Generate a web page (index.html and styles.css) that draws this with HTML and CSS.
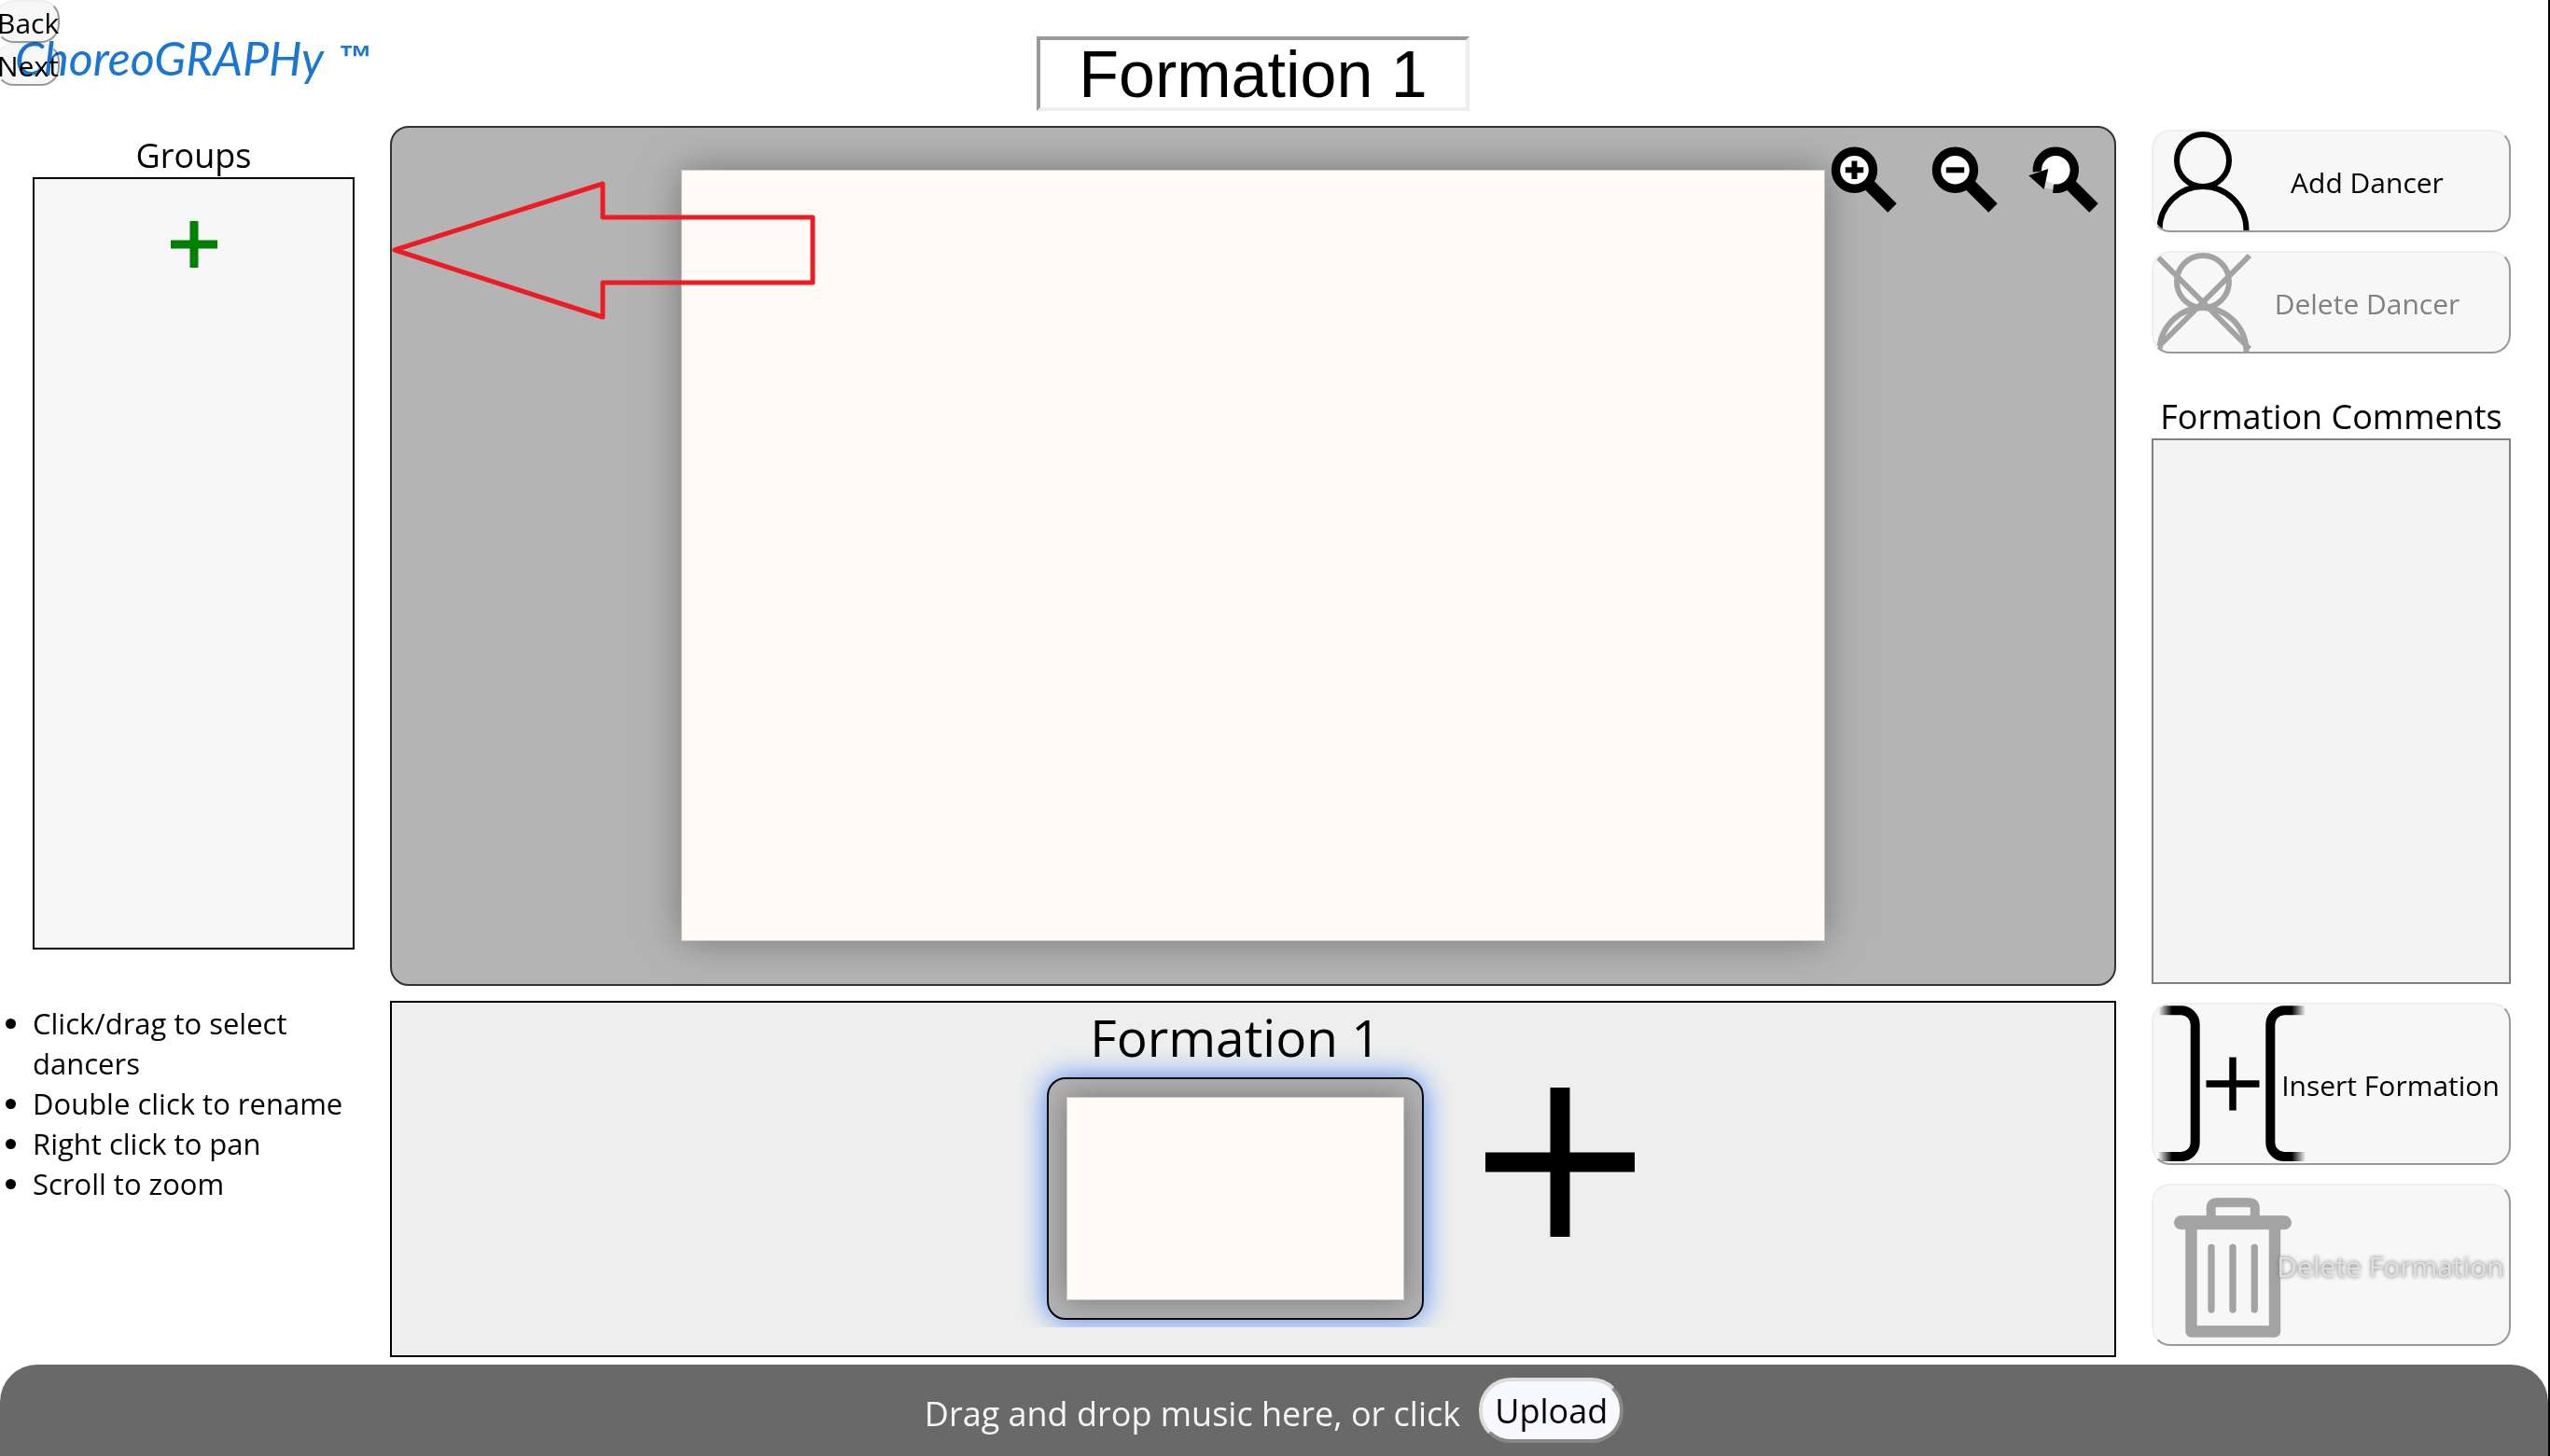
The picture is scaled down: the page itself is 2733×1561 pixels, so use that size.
FILE: index.html
```html
<!DOCTYPE html>
<html lang="en">
<head>
<meta charset="utf-8">
<title>ChoreoGRAPHy</title>
<meta name="viewport" content="width=device-width, initial-scale=1">
<link rel="stylesheet" href="styles.css">
</head>
<body>
<nav class="history" aria-label="Tutorial">
  <button class="btn history-btn" type="button">Back</button>
  <button class="btn history-btn" type="button">Next</button>
</nav>

<main class="workspace">
  <aside class="side-left">
    <h1 class="brand"><span class="brand-name">ChoreoGRAPHy</span><span class="brand-mark">™</span></h1>
    <h2 class="label">Groups</h2>
    <section class="groups">
      <button class="plain-btn" type="button" aria-label="Add group">
        <svg class="icon-group-add" viewBox="0 0 50 50"><path d="M25 0V50M0 25H50" stroke="#008000" stroke-width="9"/></svg>
      </button>
    </section>
    <ul class="tips">
      <li>Click/drag to select dancers</li>
      <li>Double click to rename</li>
      <li>Right click to pan</li>
      <li>Scroll to zoom</li>
    </ul>
  </aside>

  <div class="center">
    <header class="title-row">
      <input class="title-input" type="text" value="Formation 1" aria-label="Formation name">
    </header>

    <section class="stage">
      <div class="sheet"></div>
      <div class="zoom-tools">
        <button class="plain-btn" type="button" aria-label="Zoom in">
          <svg class="icon-zoom" viewBox="0 0 72 72">
            <path d="M42 42L68 68" stroke="#000" stroke-width="13.5"/>
            <circle cx="27.5" cy="27.3" r="20" fill="#fff" stroke="#000" stroke-width="9.4"/>
            <path d="M27.5 17.6V37M17.8 27.3H37.2" stroke="#000" stroke-width="6"/>
          </svg>
        </button>
        <button class="plain-btn" type="button" aria-label="Zoom out">
          <svg class="icon-zoom" viewBox="0 0 72 72">
            <path d="M42 42L68 68" stroke="#000" stroke-width="13.5"/>
            <circle cx="27.5" cy="27.3" r="20" fill="#fff" stroke="#000" stroke-width="9.4"/>
            <path d="M17.8 27.3H37.2" stroke="#000" stroke-width="6"/>
          </svg>
        </button>
        <button class="plain-btn" type="button" aria-label="Reset zoom">
          <svg class="icon-zoom" viewBox="0 0 72 72">
            <path d="M42 42L68 68" stroke="#000" stroke-width="13.5"/>
            <circle cx="27.3" cy="27.3" r="16" fill="#fff"/>
            <path d="M15 38L24.5 42L24 48L14 46Z" fill="#d8d8d8"/>
            <path d="M7.4 29A20 20 0 1 1 24.6 47.1" fill="none" stroke="#000" stroke-width="9.4"/>
            <path d="M-1.7 33.3L19.3 26L14.7 48Z"/>
          </svg>
        </button>
      </div>
      <svg class="pointer" viewBox="0 0 460 160" aria-hidden="true">
        <path d="M8 83L231 12V48H456V118H231V155Z" fill="none" stroke="#ed1c24" stroke-width="5" stroke-linejoin="round"/>
      </svg>
    </section>

    <section class="timeline">
      <article class="frame">
        <h3 class="frame-name">Formation 1</h3>
        <div class="thumb"><div class="thumb-sheet"></div></div>
      </article>
      <button class="plain-btn frame-add" type="button" aria-label="Add formation">
        <svg class="icon-frame-add" viewBox="0 0 160 160"><path d="M80 0V160M0 80H160" stroke="#000" stroke-width="21"/></svg>
      </button>
    </section>
  </div>

  <aside class="side-right">
    <button class="btn action dancer" type="button">
      <svg class="action-icon" width="110" height="106" viewBox="0 0 110 106" fill="none" stroke="#000" stroke-width="6">
        <circle cx="53" cy="31" r="28"/><path d="M6.500 107V105.500A46.500 46.500 0 0 1 99.500 105.500V107"/>
      </svg>
      Add Dancer
    </button>
    <button class="btn action dancer" type="button" disabled>
      <svg class="action-icon" width="110" height="106" viewBox="0 0 110 106" fill="none" stroke="#a3a3a3" stroke-width="6">
        <circle cx="53" cy="31" r="28"/><path d="M6.500 107V105.500A46.500 46.500 0 0 1 99.500 105.500V107M5 5L103 103M103 3L5 101"/>
      </svg>
      Delete Dancer
    </button>
    <label class="label comments-label" for="comments">Formation Comments</label>
    <textarea class="comments" id="comments"></textarea>
    <button class="btn action formation" type="button">
      <svg class="action-icon" width="170" height="170" viewBox="0 0 170 170" fill="none" stroke-width="10">
        <defs>
          <linearGradient id="fade-left" gradientUnits="userSpaceOnUse" x1="5" y1="0" x2="20" y2="0"><stop offset="0" stop-opacity="0"/><stop offset="1"/></linearGradient>
          <linearGradient id="fade-right" gradientUnits="userSpaceOnUse" x1="148" y1="0" x2="163" y2="0"><stop offset="0"/><stop offset="1" stop-opacity="0"/></linearGradient>
        </defs>
        <path d="M5 6.300H29.700A15 15 0 0 1 44.700 21.300V148A15 15 0 0 1 29.700 163H5" stroke="url(#fade-left)"/>
        <path d="M163 6.300H140.300A15 15 0 0 0 125.300 21.300V148A15 15 0 0 0 140.300 163H163" stroke="url(#fade-right)"/>
        <path d="M85 56.500V113.500M56.500 85H113.500" stroke="#000" stroke-width="7.500"/>
      </svg>
      Insert Formation
    </button>
    <button class="btn action formation" type="button" disabled>
      <svg class="action-icon" width="170" height="170" viewBox="0 0 170 170" fill="none" stroke="#a3a3a3">
        <path d="M61.700 34V24Q61.700 18.300 68 18.300H102.500Q108.800 18.300 108.800 24V34" stroke-width="10"/>
        <rect x="22" y="32.300" width="126" height="15" rx="7.500" fill="#a3a3a3" stroke="none"/>
        <path d="M40.500 45V156.500H130V45" stroke-width="12.400" stroke-linejoin="round"/>
        <path d="M62 66.500V133M85 66.500V133M108.300 66.500V133" stroke-width="7.300" stroke-linecap="round"/>
      </svg>
      <span class="ghost-text">Delete Formation</span>
    </button>
  </aside>
</main>

<footer class="music">
  <span class="music-text">Drag and drop music here, or click</span>
  <button class="btn upload" type="button">Upload</button>
</footer>
</body>
</html>
```
FILE: styles.css
```css
* {
  box-sizing: border-box;
}

body {
  margin: 0;
  min-height: 100vh;
  display: flex;
  flex-direction: column;
  position: relative;
  overflow-x: hidden;
  border-right: 2px solid #000;
  background: #fff;
  color: #000;
  font-family: "Open Sans", "Noto Sans", sans-serif;
  font-size: 30px;
}

h1, h2, h3 {
  margin: 0;
  font-weight: 400;
}

button {
  padding: 0;
  font: inherit;
  color: inherit;
}

svg {
  display: block;
  overflow: visible;
}

.btn {
  padding-top: 3px;
  border: 2px solid;
  border-color: #efefef #999 #999 #efefef;
  border-radius: 20px;
  background: #f7f7f7;
}

.plain-btn {
  border: 0;
  background: none;
}

/* Tutorial steps, floating over the corner of the page */
.history {
  position: absolute;
  top: 0;
  left: -5px;
  display: flex;
  flex-direction: column;
}

.history-btn {
  width: 69px;
  height: 46px;
  line-height: 39px;
}

.workspace {
  flex: 1;
  display: grid;
  grid-template-columns: 418px 1fr 463px;
}

/* Left column */
.side-left {
  display: flex;
  flex-direction: column;
}

.brand {
  height: 140px;
  padding: 34px 0 0 16px;
  display: flex;
  align-items: flex-start;
  gap: 16px;
  color: #1976d2;
  line-height: 56px;
  white-space: nowrap;
  mix-blend-mode: multiply;
}

.brand-name {
  font-family: Lato, sans-serif;
  font-size: 50px;
  font-style: italic;
}

.brand-mark {
  font-family: "Liberation Sans", sans-serif;
  font-size: 36px;
  font-weight: 700;
}

.label {
  height: 50px;
  font-size: 36px;
  line-height: 54px;
  text-align: center;
}

.side-left .label {
  margin: 0 38px 0 35px;
}

.groups {
  flex: 1;
  margin: 0 38px 0 35px;
  padding-top: 45px;
  display: flex;
  justify-content: center;
  align-items: flex-start;
  border: 2px solid #000;
  background: #f7f7f7;
}

.icon-group-add {
  width: 50px;
  height: 50px;
}

.tips {
  min-height: 387px;
  margin: 58px 0 0;
  padding: 0 38px 0 35px;
  font-size: 31px;
  line-height: 43px;
}

/* Centre column */
.center {
  display: flex;
  flex-direction: column;
  padding-bottom: 8px;
}

.title-row {
  height: 135px;
  padding-top: 39px;
  display: flex;
  justify-content: center;
  align-items: flex-start;
}

.title-input {
  width: 464px;
  height: 80px;
  padding: 2px 0 0;
  border: 4px solid;
  border-color: #999 #eee #eee #999;
  background: #fff;
  font-family: "Liberation Sans", sans-serif;
  font-size: 70px;
  text-align: center;
}

.stage {
  flex: 1;
  min-height: 400px;
  position: relative;
  display: flex;
  padding: 45px 310px 46px;
  border: 2px solid #333;
  border-radius: 20px;
  background: #b4b4b4;
}

.sheet {
  flex: 1;
  border: 1px solid #cfcac6;
  background: #fffaf5;
  box-shadow: 0 0 40px #777;
}

.zoom-tools {
  position: absolute;
  top: 18px;
  right: 18px;
  display: flex;
  gap: 36px;
}

.icon-zoom {
  width: 72px;
  height: 72px;
}

.pointer {
  position: absolute;
  top: 48px;
  left: -5px;
  width: 460px;
  height: 160px;
}

.timeline {
  height: 382px;
  margin-top: 16px;
  display: grid;
  grid-template-columns: 1fr 442px 1fr;
  border: 2px solid #000;
  background: #eee;
}

.frame {
  grid-column: 2;
  height: 348px;
  margin: 0 -40px;
  padding: 0 78px 0 40px;
  overflow: hidden;
}

.frame-name {
  font-size: 55px;
  line-height: 74px;
  text-align: center;
}

.thumb {
  height: 260px;
  margin-top: 6px;
  padding: 19px;
  display: flex;
  border: 2px solid #000;
  border-radius: 20px;
  background: #b3b3b3;
  box-shadow: 0 0 30px #4f8cff;
}

.thumb-sheet {
  flex: 1;
  border: 1px solid #cfcac6;
  background: #fffaf5;
  box-shadow: 0 0 30px #777;
}

.frame-add {
  justify-self: start;
  align-self: start;
  margin: 91px 0 0 28px;
}

.icon-frame-add {
  width: 160px;
  height: 160px;
}

/* Right column */
.side-right {
  display: flex;
  flex-direction: column;
  gap: 20px;
  padding: 139px 40px 20px 38px;
}

.action {
  position: relative;
  overflow: hidden;
  white-space: nowrap;
}

.action:disabled {
  color: #808080;
}

.action-icon {
  position: absolute;
  top: 0;
  left: 0;
}

.dancer {
  height: 110px;
  padding-left: 77px;
}

.formation {
  height: 174px;
  padding-left: 127px;
}

.ghost-text {
  position: relative;
  color: #e0e0e0;
  text-shadow: 0 0 4px #666;
}

.comments-label {
  margin: 21px 0 -20px;
  white-space: nowrap;
}

.comments {
  flex: 1;
  min-height: 100px;
  width: 100%;
  padding: 8px;
  border: 2px solid #808080;
  background: #f4f4f4;
  font: inherit;
  resize: none;
}

/* Music bar */
.music {
  min-height: 98px;
  display: flex;
  justify-content: center;
  align-items: center;
  gap: 20px;
  border-radius: 40px 40px 0 0;
  background: #696969;
  color: #f5f5f5;
  font-size: 36px;
}

.music-text {
  padding-top: 6px;
}

.upload {
  width: 155px;
  height: 70px;
  padding: 0;
  border-width: 4px;
  border-color: #dcdcdc #888 #888 #dcdcdc;
  border-radius: 34px;
  background: #f8f8ff;
  color: #000;
}
```
